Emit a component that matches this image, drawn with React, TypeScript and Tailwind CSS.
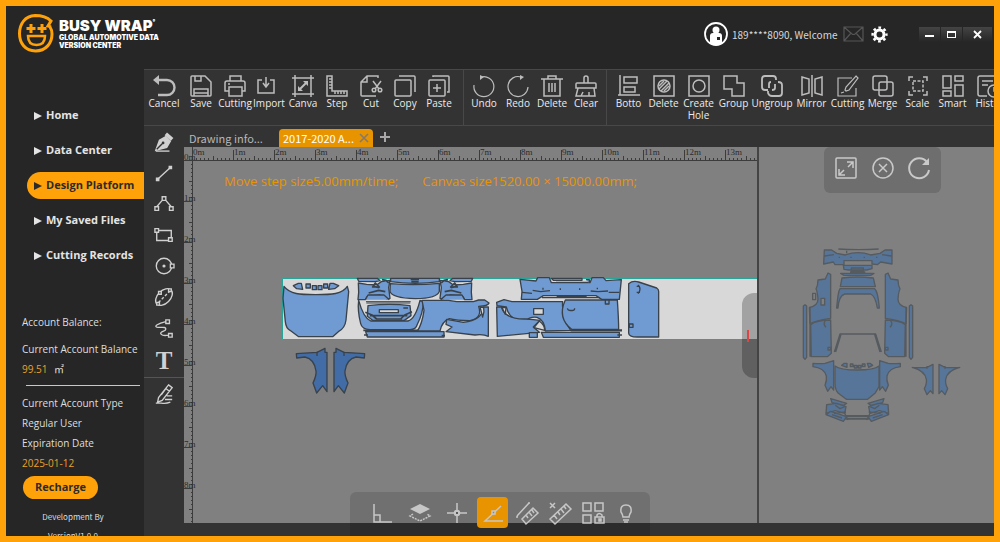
import React from 'react';

const I = ({ children, size = 22, className = '' }: { children: React.ReactNode, size?: number, className?: string }) => (
  <svg
    width={size}
    height={size}
    viewBox="0 0 22 22"
    fill="none"
    stroke="currentColor"
    strokeWidth="1.5"
    className={`shrink-0 overflow-visible ${className}`}
    aria-hidden="true"
  >
    {children}
  </svg>
);

const icons: Record<string, React.ReactNode> = {
  cancel: <><path d="M4 5h10a7.500 7.500 0 0 1 0 15H5" strokeWidth="2.400" /><path d="M6 0v10L0 5z" fill="currentColor" stroke="none" /></>,
  save: <path d="M2 1h13l6 6v13a1 1 0 0 1-1 1H2a1 1 0 0 1-1-1V2a1 1 0 0 1 1-1zM5 1v5h6V1M4 21v-7h14v7M4 18h14" />,
  print: <path d="M6 6V1h11v5M5 16H1V8q0-2 2-2h16q2 0 2 2v8h-3M5 12h13v9H5zM4 9h2" />,
  download: <path d="M4 5H0v13h16V5h-4M8 2v9M5 8l3 4 3-4" />,
  crop: <><path d="M3 0v22M19 0v22M0 3h22M0 19h22" /><path d="M8 14l6-6" strokeWidth="2" /><path d="M11 6h5v5zM6 11v5h5z" fill="currentColor" stroke="none" /></>,
  ruler: <path d="M1 1h5v15h15v5H1zM3 4h3M3 7h3M3 10h3M3 13h3M9 16v3M12 16v3M15 16v3M18 16v3" />,
  cut: <><path d="M18 3V1H7L1 7v13q0 1 1 1h14M7 1v6H1" /><circle cx="14" cy="15" r="1.8" /><circle cx="20" cy="15" r="1.8" /><path d="M13 6l6 8M21 6l-6 8" /></>,
  copy: <path d="M2 5h14q1 0 1 1v14q0 1-1 1H2q-1 0-1-1V6q0-1 1-1zM5 1h15q1 0 1 1v15" />,
  paste: <path d="M2 5h14q1 0 1 1v14q0 1-1 1H2q-1 0-1-1V6q0-1 1-1zM5 2V1h15q1 0 1 1v15h-2M9 9v8M5 13h8" />,
  undo: <><path d="M8 2a10 10 0 1 1-7 8" strokeWidth="1.2" /><path d="M7 0v5l4-3z" fill="currentColor" stroke="none" /></>,
  redo: <><path d="M14 2a10 10 0 1 0 7 10" strokeWidth="1.2" /><path d="M13 0v5l4-3z" fill="currentColor" stroke="none" /></>,
  trash: <path d="M0 4h22M7 4V1h8v3M3 4v17h16V4M8 8v9M11 8v9M14 8v9" />,
  clear: <path d="M9 8V3q0-2 2-2t2 2v5M2 8h18q1 0 1 1v4H1V9q0-1 1-1zM3 13L1 21h19l-1-8M6 21l2-4M14 21v-4" />,
  align: <path d="M2 0v20M6 2h13v6H6zM6 12h11v5H6zM0 20h22" />,
  hatch: <><path d="M1 1h20v20H1z" /><circle cx="11" cy="11" r="6" /><path d="M6 11l5-5M6 14l8-8M8 16l8-8M11 16l5-5" /></>,
  hole: <><path d="M1 1h20v20H1z" /><circle cx="11" cy="11" r="6" /></>,
  group: <path d="M1 1h13v7h7v13H9v-7H1z" />,
  ungroup: <path d="M7 15H4q-3 0-3-3V4q0-3 3-3h8q3 0 3 3v1M17 7q4 0 4 3v8q0 3-3 3h-7q-3 0-4-3v-2M8 13V9q0-2 2-2M14 9v4q0 2-3 2" strokeWidth="1.8" />,
  mirror: <path d="M1 2l7 2v14l-7 2zM21 2l-7 2v14l7 2zM11 0v22" />,
  knife: <path d="M15 3H1v18h18v-8M19 1l2 2-9 12-3 1-1-1 1-3zM7 17l-3 1" strokeWidth="1.2" />,
  merge: <path d="M3 1h10q2 0 2 2v10q0 2-2 2H3q-2 0-2-2V3q0-2 2-2zM9 7h10q2 0 2 2v10q0 2-2 2H9q-2 0-2-2V9q0-2 2-2z" />,
  scale: <><path d="M2 6V2h4M16 2h4v4M20 16v4h-4M6 20H2v-4" /><path d="M6 6h10v10H6z" strokeDasharray="3 1.5" /></>,
  smart: <path d="M1 1h8v12H1zM13 1h8v5h-8zM13 10h8v11h-8zM1 16h8v5H1z" />,
  history: <><path d="M20 8V3q0-2-2-2H3Q1 1 1 3v16q0 2 2 2h7M5 6h11M5 10h6" /><circle cx="17" cy="16" r="6" /><path d="M17 12v4h4" /></>,
};

type ToolItem = { icon: string, label: string, w?: string };

const fileTools: ToolItem[] = [
  { icon: 'cancel', label: 'Cancel', w: 'w-10' },
  { icon: 'save', label: 'Save' },
  { icon: 'print', label: 'Cutting' },
  { icon: 'download', label: 'Import' },
  { icon: 'crop', label: 'Canva' },
  { icon: 'ruler', label: 'Step' },
  { icon: 'cut', label: 'Cut' },
  { icon: 'copy', label: 'Copy' },
  { icon: 'paste', label: 'Paste' },
];

const editTools: ToolItem[] = [
  { icon: 'undo', label: 'Undo' },
  { icon: 'redo', label: 'Redo' },
  { icon: 'trash', label: 'Delete' },
  { icon: 'clear', label: 'Clear' },
];

const shapeTools: ToolItem[] = [
  { icon: 'align', label: 'Botto', w: 'w-[35px]' },
  { icon: 'hatch', label: 'Delete', w: 'w-[35px]' },
  { icon: 'hole', label: 'Create Hole', w: 'w-[35px]' },
  { icon: 'group', label: 'Group', w: 'w-[35px]' },
  { icon: 'ungroup', label: 'Ungroup', w: 'w-[42px]' },
  { icon: 'mirror', label: 'Mirror', w: 'w-[37px]' },
  { icon: 'knife', label: 'Cutting', w: 'w-[35px]' },
  { icon: 'merge', label: 'Merge', w: 'w-[35px]' },
  { icon: 'scale', label: 'Scale', w: 'w-[35px]' },
  { icon: 'smart', label: 'Smart', w: 'w-[35px]' },
  { icon: 'history', label: 'Histo', w: 'w-[35px]' },
];

const ToolGroup = ({ items, className }: { items: ToolItem[], className: string }) => (
  <div className={`flex shrink-0 ${className}`}>
    {items.map((item, index) => (
      <button key={index} className={`flex shrink-0 flex-col items-center ${item.w ?? 'w-[34px]'}`}>
        <I>{icons[item.icon]}</I>
        <span className={`text-[10px] leading-[12px] text-[#ececec] ${item.label.includes(' ') ? '' : 'whitespace-nowrap'}`}>
          {item.label}
        </span>
      </button>
    ))}
  </div>
);

const Toolbar = () => (
  <div className="flex h-[57px] shrink-0 overflow-hidden border-y border-[#484848] text-[#bdbdbd]">
    <ToolGroup items={fileTools} className="pt-[5px] pr-[7px]" />
    <div className="w-px shrink-0 bg-[#484848]" />
    <ToolGroup items={editTools} className="px-[3px] pt-[5px]" />
    <div className="w-px shrink-0 bg-[#484848]" />
    <ToolGroup items={shapeTools} className="pt-[5px] pl-1" />
  </div>
);

const drawTools: { name: string, icon: React.ReactNode }[] = [
  { name: 'Pen', icon: <><path d="M2 20L6 9l7-4 5 5-4 7zM2 20l7-7" fill="currentColor" /><path d="M13 2l7 6" strokeWidth="4" /><path d="M3 19l6-6" stroke="#333" /><circle cx="10" cy="12" r="1.5" fill="#333" stroke="none" /><path d="M2 21h15" /></> },
  { name: 'Line', icon: <><path d="M4 18L18 5" /><path d="M2 16h4v4H2zM16 3h4v4h-4z" fill="currentColor" stroke="none" /></> },
  { name: 'Polyline', icon: <path d="M9 3h4v4H9zM1 14h4v4H1zM17 14h4v4h-4zM9 7l-6 7M13 7l6 7" /> },
  { name: 'Rectangle', icon: <path d="M1 4h4v4H1zM16 14h4v4h-4zM5 6h14v8M3 8v9h13" /> },
  { name: 'Circle', icon: <><circle cx="11" cy="11" r="8.5" /><circle cx="11" cy="11" r="1" fill="currentColor" /><path d="M18 9h4v4h-4z" fill="#333" /></> },
  { name: 'Ellipse', icon: <><ellipse cx="11" cy="11" rx="11" ry="7" transform="rotate(-45 11 11)" /><path d="M5 17L17 5" strokeDasharray="3 2" /><path d="M3 17h3v3H3zM16 2h3v3h-3zM5 5h3v3H5z" fill="#333" /></> },
  { name: 'Curve', icon: <path d="M13 2h4v4h-4zM16 17h4v4h-4zM13 4C4 6 0 9 3 10c4 1 10-1 10 2s-8 3-5 6c2 2 5 1 8 1" /> },
];

const DrawTools = () => (
  <div className="flex w-10 shrink-0 flex-col items-center text-[#d0d0d0]">
    {drawTools.map((tool) => (
      <button key={tool.name} aria-label={tool.name} className="flex h-[31px] items-center">
        <I size={20}>{tool.icon}</I>
      </button>
    ))}
    <button aria-label="Text" className="h-[34px] font-['Liberation_Serif',serif] text-[25px] leading-[36px] font-bold">
      T
    </button>
    <button aria-label="Edit" className="flex h-8 w-full items-center justify-center border-t border-[#555]">
      <I size={20}>
        <path d="M16 1l4 3-11 14-5 2 1-5zM13 5l4 3M8 12l5-7M2 21h6q5 1 10-1M14 13h6M12 17h8" />
      </I>
    </button>
  </div>
);

const Ruler = () => (
  <g stroke="#3c3c3c" fill="#2c2c2c" shapeRendering="crispEdges">
    <path d="M0 13.5H2400M8.5 0V1600" />
    {Array.from({ length: 40 }, (_, m) => (
      <g key={m}>
        <path d={`M${8.5 + m * 41} 3v10M${29.5 + m * 41} 9v4M0 ${13.5 + m * 41}h8M5 ${34.5 + m * 41}h3`} />
        {[4, 8, 12, 16, 25, 29, 33, 37].map((t) => (
          <path key={t} d={`M${8.5 + m * 41 + t} 11v2M7 ${13.5 + m * 41 + t}h1`} />
        ))}
      </g>
    ))}
    <g stroke="none" className="font-['Liberation_Serif',serif] text-[9px]">
      {Array.from({ length: 14 }, (_, m) => (
        <text key={m} x={9 + m * 41} y="8">{m}m</text>
      ))}
      {Array.from({ length: 9 }, (_, m) => (
        <text key={m} x="0" y={13 + m * 41}>{m}m</text>
      ))}
    </g>
  </g>
);

const BumperCorner = () => (
  <>
    <path d="M262 40h60l8 7-14 3-50-1z" />
    <path d="M265 54l25 4 30 2 14-10 26-4-4 22 4 32-10 2-20-12-38 4-6 10h-22l2-22z" />
    <path d="M310 64l18 4M296 84l30-8 20 4M300 96l44 2M316 54l-8 12h20zM336 44l12 2 8 8" strokeWidth="5" />
    <path d="M286 104l8-14h48l16 14" />
  </>
);

const Wing = () => (
  <>
    <path d="M79 266l62-4 24-12v12h6v118l-13-18-18 22-11-30q11-24 9-36-5-36-33-42l-25 3z" />
    <path d="M141 260v13" strokeWidth="4" />
  </>
);

const CutSheet = () => (
  <>
    <path d="M98.500 131.500H2400V192.500H98.500z" fill="#d8d8d8" stroke="#27a599" />
    <g transform="translate(86 118) scale(.33333)" fill="#709bd2" stroke="#39424b" strokeWidth="4" strokeLinejoin="round">
      <path d="M42 64C60 88 90 89 137 89s80-1 95-25l4 16-8 85q-3 25-23 35l-17 15H86l-26-19q-12-6-14-26l-7-70z" />
      <path d="M70 62l15-7h9l4 18-18-2zM108 57h13v12h-13zM127 62h12v12h-12zM144 62h12v12h-12zM161 57h12v12h-12zM180 55h10l16 7-12 9-18 2z" />
      <BumperCorner />
      <g transform="translate(870 0) scale(-1 1)"><BumperCorner /></g>
      <path d="M362 40h146v10q-72 10-146 0z" />
      <path d="M361 56q75 6 147-1v24q-6 21-72 22-70-2-76-22z" />
      <path d="M422 43h25M424 50h22" strokeWidth="6" />
      <path d="M266 106q14 52 36 62h112q22-6 36-62l10 4q0 32-19 70-3 13-21 14H300q-24-1-28-18-10-40-6-70z" />
      <path d="M288 110h134M289 114h132" strokeWidth="3" />
      <path d="M294 122q66-8 126 0l3 30-20 14h-95l-16-12z" />
      <path d="M286 142l20 8 14 12M426 140l-22 10-12 12M300 152h112M318 162h78M400 129h14" strokeWidth="5" />
      <path d="M328 134h57v9h-57z" fill="#d8d8d8" />
      <path d="M287 200h235v16H292z" />
      <path d="M280 196h165M282 210h12M515 212h10" strokeWidth="5" />
      <path d="M456 106h80l24 4h50l16-5h18l13 9q-2 9-31 10 12 36-26 43-40 0-62-6-22 8-28 37h-68q14-20 20-62z" />
      <path d="M530 163l50 9q58-6 60-46h15v88q-14-7-40-4l-87-10 18-14-18-8z" />
      <path d="M630 126l8 30q6-14 3-28z" fill="#d8d8d8" />
      <g fill="#426ca5">
        <Wing />
        <g transform="translate(363 0) scale(-1 1)"><Wing /></g>
      </g>
    </g>
    <g transform="translate(296 118) scale(.33333)" fill="#709bd2" stroke="#39424b" strokeWidth="4" strokeLinejoin="round">
      <path d="M120 43l48 5 5-10h35l6 15h116l6-15h34l8 9 46-3-6 59h-53l-17-11H190l-18 11h-48l2-24z" />
      <path d="M214 40h92v6h-86zM228 52h96M318 44h10v10M158 76l24 4 28-3M332 78l22 2 30-2M189 68v6M241 70v5M299 70v5M352 68v5M126 82l30 3M386 82h32M186 98h174M230 94h90" />
      <path d="M50 112l22-8 24 6h152q-4 46 24 86l-76 2q-3-34-25-41-22-3-34 11-48 2-58-42l-28-4z" />
      <path d="M50 126h14q12 38 74 36l22 2 20 2-20 20 18 16-126 12z" />
      <path d="M66 128q8 16 10 20l2-20zM178 168l-16 20 32 8q0-16-16-28zM161 131h29v17h-29z" fill="#d8d8d8" />
      <path d="M256 105h156q4 60 4 88H275q-44-34-19-88z" />
      <path d="M376 105h11v12h-11zM262 130q2 8 12 6 10 2 10-6" />
      <path d="M272 196h154" strokeWidth="7" />
      <path d="M184 202h234v15H190zM148 203h24v14h-24zM412 210h14" />
      <path d="M446 56q12-10 30-5l54 18q6 4 6 10v137h-64q-26 0-26-12zM474 60q12 12 0 26M470 64h10M470 82h10M448 177h11v10h-11z" />
    </g>
  </>
);

const CarSide = () => (
  <>
    <path d="M84 420l22-3 8-18 8 4v132q-40 6-62 16l-2-48q26-6 26-26-2-24-6-30 6-12 6-27z" />
    <path d="M62 554q16-14 60-14l2 100-12 10H64zM40 498l5-4 5 4v154l-5 6-5-6zM60 500v150" />
    <path d="M106 542q-8 10 2 20M114 622h8v8h-8z" />
  </>
);

const SmallWing = () => (
  <path d="M69 670q24 2 36 0l26-8v88l-8-10-10 14-8-18q6-16 4-28-6-24-40-28z" />
);

const HeadLight = () => (
  <>
    <path d="M122 776l48 14-8 6-36-8zM110 794l30-4 28 10-4 20-28-8-28 8z" />
    <path d="M122 814l48 16-10 14-52-20zM136 796l14 10 14-6M132 820l36-4M126 824l30 10M164 820l10 20" />
  </>
);

const CarPreview = () => (
  <svg className="absolute top-0 left-0 h-full w-full" aria-label="Vehicle preview">
    <g transform="translate(31 -7) scale(.33333)" fill="#567599" stroke="#565b60" strokeWidth="4" strokeLinejoin="round">
      <path d="M103 330h22l15 10 26 5q38-14 76 0l28-5 15-10h21v42l-34-6-10 8-16-2v-10h-84v12h-27l-5-8-29 6zM145 327q60 4 121 0M104 348l28-4M276 344l28 4M148 350v4M183 350v4M223 350v4M260 350v4M170 332v8" />
      <path d="M160 376h86v10l-16 4h-54l-14-2zM184 384h36v8h-36zM152 400h100l-10 6h-80zM180 396h46M176 406h54" />
      <path d="M156 414q46-6 94 0l6 26H151z" />
      <path d="M150 446h104q10 8 14 58h-6q-6-36-20-42h-78q-18 6-20 42h-4q4-50 10-58z" />
      <path d="M133 636l17-54h107l17 54M137 636l16-52M270 636l-16-52" fill="none" />
      <CarSide />
      <path d="M68 460h9v19h-9zM93 475h11v20H93z" fill="#808080" />
      <g transform="translate(408 0) scale(-1 1)"><CarSide /></g>
      <SmallWing />
      <g transform="translate(400 0) scale(-1 1)"><SmallWing /></g>
      <path d="M135 678q16 12 66 12 52 0 66-12v62l-12 20-22 18h-64l-24-18q-10-10-10-30z" />
      <path d="M155 676l8-6h8v12zM181 672h8v8h-8zM193 676h8v8h-8zM205 676h8v8h-8zM217 672h8v8h-8zM232 670h8l8 6-12 6z" />
      <HeadLight />
      <g transform="translate(404 0) scale(-1 1)"><HeadLight /></g>
      <path d="M166 828h72M166 836h72" strokeWidth="6" />
      <path d="M367 683l44-1 18-9v88l-8-9-10 12-8-18q8-16 6-28-4-26-42-36zM509 683l-44-1-18-9v88l8-9 10 12 8-18q-8-16-6-28 4-26 42-36zM411 678v8M465 678v8" />
    </g>
  </svg>
);

const Tabs = () => (
  <div className="flex h-[21px] shrink-0 items-end text-[11px] leading-[17px]">
    <button className="w-[95px] pl-[5px] text-left font-['Noto_Sans_CJK_SC',sans-serif] text-[#b8b8b8]">Drawing info...</button>
    <div className="flex h-[18px] w-[94px] items-center justify-between rounded-t-sm bg-[#e89400] pr-1 pl-1 text-white">
      <button className="font-['Noto_Sans_CJK_SC',sans-serif] whitespace-nowrap">2017-2020 A...</button>
      <button aria-label="Close tab" className="text-[#85796a]">
        <svg width="10" height="10" viewBox="0 0 10 10" stroke="currentColor" strokeWidth="1.6"><path d="M1 1l8 8M9 1L1 9" /></svg>
      </button>
    </div>
    <button aria-label="New tab" className="self-start pt-1.5 pl-[7px] text-[#a8a8a8]">
      <svg width="10" height="10" viewBox="0 0 10 10" stroke="currentColor" strokeWidth="2"><path d="M5 0v10M0 5h10" /></svg>
    </button>
  </div>
);

const Workspace = () => (
  <div className="flex min-h-0 flex-1 bg-[#808080]">
    <div className="relative flex-1 overflow-hidden">
      <svg className="absolute top-0 left-0 h-full w-full" aria-label="Cutting canvas">
        <CutSheet />
        <Ruler />
      </svg>
      <div className="relative flex gap-6 pt-[25px] pl-10 text-[13px] leading-[18px] whitespace-nowrap text-[#e89400]">
        <p>Move step size5.00mm/time;</p>
        <p>Canvas size1520.00 × 15000.00mm;</p>
      </div>
      <button aria-label="Toggle panel" className="absolute top-[146px] right-0 h-[85px] w-[15px] rounded-l-xl bg-black/25">
        <span className="ml-[5px] block h-3 w-[2px] bg-[#dd4444]" />
      </button>
    </div>
    <div className="w-[2px] bg-[#444]" />
    <div className="relative flex w-[235px] shrink-0 items-start justify-center overflow-hidden pl-3">
      <CarPreview />
      <div className="relative flex h-[46px] w-[117px] justify-between rounded-md bg-[#6e6e6e] px-[11px] pt-2.5 text-[#c9c9c9]">
        <button aria-label="Full screen" className="self-start"><I><path d="M2 1h18q1 0 1 1v18q0 1-1 1H2q-1 0-1-1V2q0-1 1-1zM12 5h6v6M18 5l-5 5M4 12v6h6M4 18l5-5" /></I></button>
        <button aria-label="Close preview" className="self-start"><I><circle cx="11" cy="11" r="10" /><path d="M7 7l8 8M15 7l-8 8" /></I></button>
        <button aria-label="Rotate" className="self-start"><I><path d="M19 5a10 10 0 1 0 2 8" strokeWidth="2" /><path d="M21 1v7h-7z" fill="currentColor" stroke="none" /></I></button>
      </div>
    </div>
  </div>
);

const snapTools: { name: string, w: string, icon: React.ReactNode }[] = [
  { name: 'Right angle', w: 'w-[37px]', icon: <path d="M2 2v18h18M2 13h6v7" /> },
  { name: 'Layers', w: 'w-[37px]', icon: <><path d="M11 2l10 5-10 5L1 7z" fill="currentColor" stroke="none" /><path d="M4 12l-3 2 10 5 10-5-3-2" strokeDasharray="2 1" /></> },
  { name: 'Crosshair', w: 'w-[37px]', icon: <><path d="M11 1v20M1 11h20" /><circle cx="11" cy="11" r="2.500" fill="currentColor" /><circle cx="11" cy="11" r="1" fill="#333" stroke="none" /></> },
  { name: 'Angle', w: 'w-[35px]', icon: <><path d="M19 4L3 19h18" /><path d="M10 9h3v3h-3z" fill="#888" /></> },
  { name: 'Measure', w: 'w-[33px]', icon: <path d="M6 17L17 6l5 5L10 22zM10 13l2 3M13 10l3 4M16 8l2 3M1 14L13 1M0 15h2M12 1h2" /> },
  { name: 'Clear measure', w: 'w-[33px]', icon: <path d="M1 17L17 2l5 5L6 22zM5 13l3 4M9 10l2 3M12 7l3 4M15 4l2 3M1 1l5 5M6 1L1 6" /> },
  { name: 'Lock grid', w: 'w-[33px]', icon: <><path d="M1 1h8v8H1zM13 1h8v8h-8zM1 13h8v8H1zM13 15h9v6h-9zM15 15v-2q2-3 5 0v2" /><path d="M17 17h2v2h-2z" fill="currentColor" /></> },
  { name: 'Hint', w: 'w-[33px]', icon: <path d="M8 15q0-2-2-5-1-7 5-7t5 7q-2 3-2 5zM8 18h6M9 20h4" /> },
];

const SnapBar = () => (
  <div className="absolute bottom-0 left-1/2 flex h-11 -translate-x-1/2 rounded-t-md bg-black/12 pt-[5px] pr-2 pl-3.5 text-[#c6c6c6]">
    {snapTools.map((tool) => (
      <button key={tool.name} aria-label={tool.name} className={`flex h-[31px] justify-center ${tool.w}`}>
        <span className={`flex h-[31px] w-[31px] items-center justify-center rounded-sm ${tool.name === 'Angle' ? 'bg-[#e89400]' : ''}`}>
          <I>{tool.icon}</I>
        </span>
      </button>
    ))}
  </div>
);

const Header = () => (
  <header className="flex h-[63px] shrink-0 items-start justify-between pr-[2px]">
    <div className="flex items-center gap-[5px] pt-2 pl-3 text-white">
      <svg width="36" height="39" viewBox="0 0 36 39" fill="none" stroke="#ffa20a" strokeWidth="3" aria-hidden="true">
        <path d="M33 13l-3-1 3-5C29 3 23 1.500 17 1.500 7 2 1.500 10 1.500 19.500S7 37 17.500 37 34 29 34 20q0-4-2-7" />
        <path d="M13 10v9M8.500 14.500h9M24 10v9M19.500 14.500h9" strokeWidth="3" />
        <path d="M10 22h17q0 9-8.500 9T10 22z" strokeWidth="2.500" />
      </svg>
      <div className="font-[Inter,sans-serif] leading-none font-black">
        <div className="flex text-[15px] leading-[16px]">BUSY WRAP<span className="text-[6px] leading-[8px]">°</span></div>
        <div className="text-[7px] leading-[8px] whitespace-nowrap">GLOBAL AUTOMOTIVE DATA<br />VERSION CENTER</div>
      </div>
    </div>
    <div className="flex items-center pt-4 text-[11px] text-[#d8d8d8]">
      <svg width="24" height="24" viewBox="0 0 24 24" aria-hidden="true">
        <circle cx="12" cy="12" r="11" fill="none" stroke="#fff" strokeWidth="1.800" />
        <circle cx="12" cy="8" r="3.500" fill="#fff" />
        <path d="M6 21v-7q0-3 3-3h6q3 0 3 3v7q-6 3-12 0z" fill="#fff" />
        <path d="M13 15h3v3h-3z" fill="#262626" />
      </svg>
      <span className="ml-1 w-[102px] font-['Noto_Sans_CJK_SC',sans-serif] text-[10px] whitespace-nowrap">189****8090, Welcome</span>
      <button aria-label="Messages" className="ml-[9px] text-[#555]">
        <svg width="21" height="16" viewBox="0 0 21 16" fill="none" stroke="currentColor" strokeWidth="1.200">
          <path d="M1 1h19v14H1zM1 1l8 7q1.500 1 3 0l8-7M1 15l7-8M20 15l-7-8" />
        </svg>
      </button>
      <button aria-label="Settings" className="ml-[7px] text-white">
        <svg width="17" height="17" viewBox="0 0 17 17" fill="none" stroke="currentColor">
          <circle cx="8.500" cy="8.500" r="4.500" strokeWidth="3" />
          <circle cx="8.500" cy="8.500" r="6.900" strokeWidth="2.400" strokeDasharray="2.700 2.720" strokeDashoffset="1.350" />
        </svg>
      </button>
      <div className="ml-[31px] flex h-[15px] gap-px text-white">
        <button aria-label="Minimize" className="flex w-[21px] items-center justify-center bg-gradient-to-b from-[#444] to-[#262626]"><span className="mt-[3px] h-[2px] w-[9px] bg-white" /></button>
        <button aria-label="Maximize" className="flex w-[21px] items-center justify-center bg-gradient-to-b from-[#444] to-[#262626]"><span className="h-[7px] w-[9px] border border-t-2 border-white" /></button>
        <button aria-label="Close" className="flex w-[29px] items-center justify-center bg-gradient-to-b from-[#444] to-[#262626]">
          <svg width="9" height="9" viewBox="0 0 9 9" stroke="currentColor" strokeWidth="1.800"><path d="M1 1l7 7M8 1L1 8" /></svg>
        </button>
      </div>
    </div>
  </header>
);

const navItems = ['Home', 'Data Center', 'Design Platform', 'My Saved Files', 'Cutting Records'];

const Sidebar = () => (
  <aside className="flex w-[138px] shrink-0 flex-col overflow-hidden text-[11px] text-[#dedede]">
    <nav className="mt-[33px] flex flex-col gap-2 pl-[21px]">
      {navItems.map((item) => (
        <a
          key={item}
          href="#"
          className={`flex h-[27px] items-center gap-1 rounded-l-full pl-[7px] text-[11px] font-bold whitespace-nowrap ${item === 'Design Platform' ? 'bg-[#ffa20a] text-[#2b2b2b]' : 'text-[#e4e4e4]'}`}
        >
          <svg width="8" height="8" viewBox="0 0 8 8" fill="currentColor" aria-hidden="true"><path d="M0 0l8 4-8 4z" /></svg>
          {item}
        </a>
      ))}
    </nav>
    <div className="mt-[43px] pl-4 text-[10px] leading-5 whitespace-nowrap">
      <p>Account Balance:</p>
      <p className="mt-[7px]">Current Account Balance</p>
      <p className="text-[#eda02a]">99.51 <span className="ml-1 font-['Noto_Sans_CJK_SC',sans-serif] text-[#dedede]">㎡</span></p>
    </div>
    <hr className="mt-1.5 mr-1 ml-5 border-[#c8c8c8]" />
    <div className="mt-[7px] pl-4 text-[10px] leading-5 whitespace-nowrap">
      <p>Current Account Type</p>
      <p>Regular User</p>
      <p>Expiration Date</p>
      <p className="text-[#eda02a]">2025-01-12</p>
    </div>
    <button className="mt-[3px] ml-[17px] h-[23px] w-[75px] shrink-0 rounded-full bg-[#ffa20a] text-[11px] font-bold text-[#2b2b2b]">Recharge</button>
    <div className="mt-2 pr-1 text-center font-['Noto_Sans_CJK_SC',sans-serif] text-[8px] leading-[19px]">
      <p>Development By</p>
      <p>VersionV1.0.0</p>
    </div>
  </aside>
);

const App = () => {
  return (
    <div className="relative flex h-screen flex-col overflow-hidden border-6 border-[#ffa20a] bg-[#262626] font-['Open_Sans','Noto_Sans',sans-serif]">
      <Header />
      <div className="flex min-h-0 flex-1">
        <Sidebar />
        <main className="flex min-w-0 flex-1 flex-col bg-[#333]">
          <Toolbar />
          <div className="flex min-h-0 flex-1">
            <DrawTools />
            <div className="flex min-w-0 flex-1 flex-col pb-[13px]">
              <Tabs />
              <Workspace />
            </div>
          </div>
        </main>
      </div>
      <SnapBar />
    </div>
  );
};

export default App;
